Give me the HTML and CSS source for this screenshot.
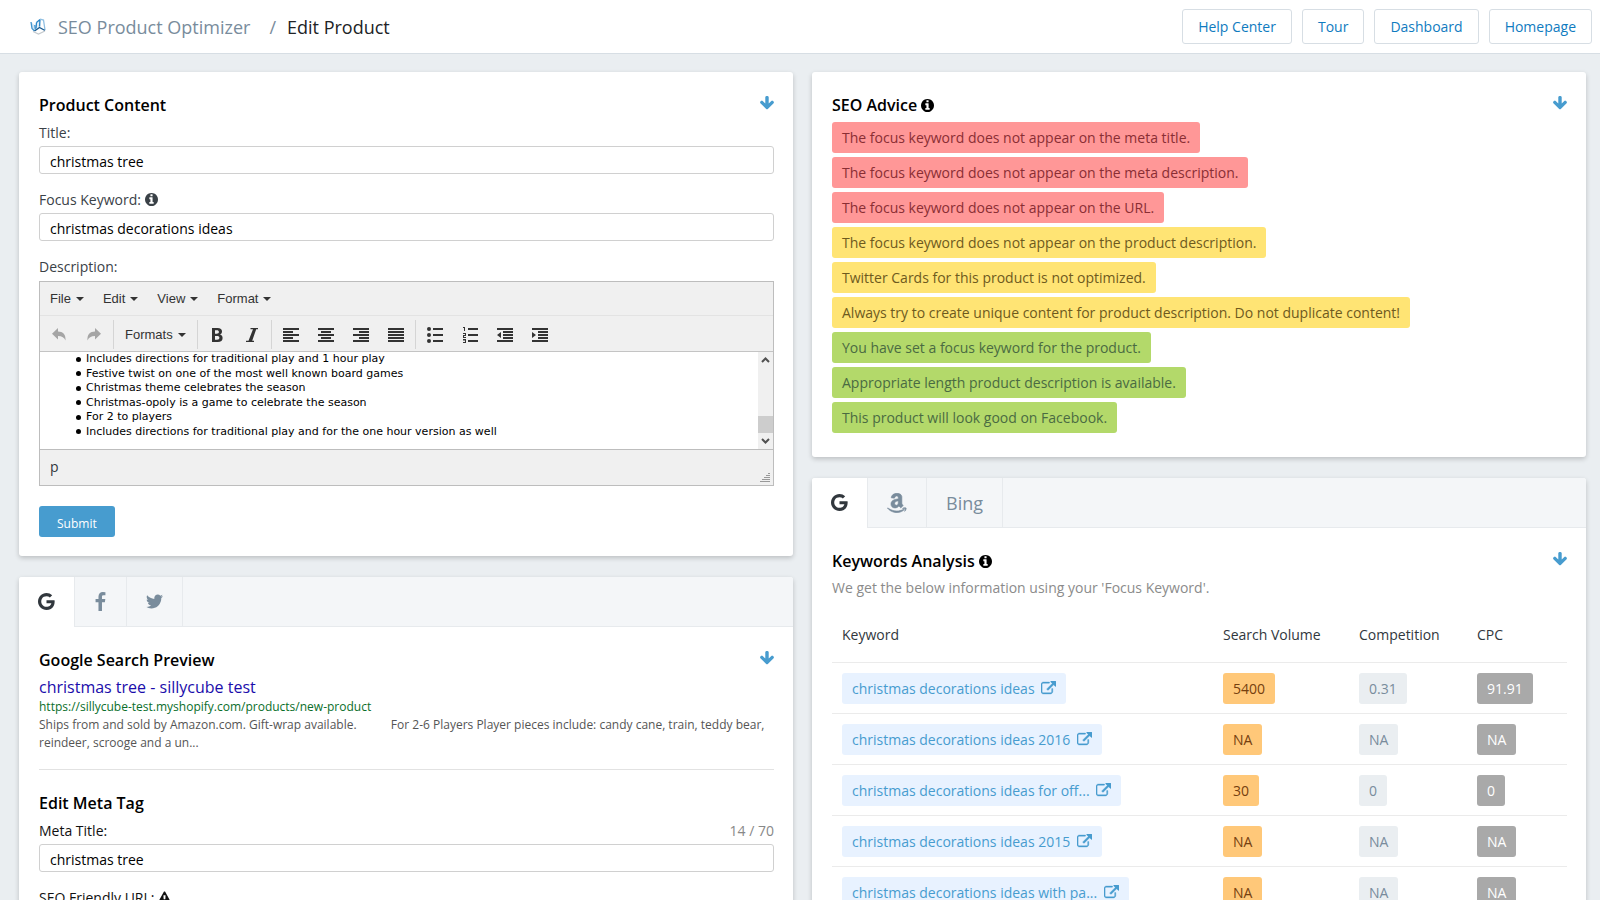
FILE: index.html
```html
<!DOCTYPE html>
<html lang="en">
<head>
<meta charset="utf-8">
<title>SEO Product Optimizer / Edit Product</title>
<link rel="stylesheet" href="styles.css">
</head>
<body>
<svg class="sprite" aria-hidden="true">
  <symbol id="arrow-down" viewBox="110 128 1572 1550"><path d="M1675 832q0 53-37 90l-651 652q-39 37-91 37-53 0-90-37l-651-652q-38-36-38-90 0-53 38-91l74-75q39-37 91-37 53 0 90 37l294 294v-704q0-52 38-90t90-38h128q52 0 90 38t38 90v704l294-294q37-37 90-37 52 0 91 37l75 75q37 39 37 91z"/></symbol>
  <symbol id="info" viewBox="128 128 1536 1536"><path d="M1152 1376v-160q0-14-9-23t-23-9h-96v-512q0-14-9-23t-23-9h-320q-14 0-23 9t-9 23v160q0 14 9 23t23 9h96v320h-96q-14 0-23 9t-9 23v160q0 14 9 23t23 9h448q14 0 23-9t9-23zm-128-896v-160q0-14-9-23t-23-9h-192q-14 0-23 9t-9 23v160q0 14 9 23t23 9h192q14 0 23-9t9-23zm640 416q0 209-103 385.5t-279.5 279.5-385.5 103-385.5-103-279.5-279.5-103-385.5 103-385.5 279.5-279.5 385.5-103 385.5 103 279.5 279.5 103 385.5z"/></symbol>
  <symbol id="google" viewBox="128 128 1536 1536"><path d="M896 786h725q12 67 12 128 0 217-91 387.5t-259.5 266.5-386.5 96q-157 0-299-60.5t-245-163.5-163.5-245-60.5-299 60.5-299 163.5-245 245-163.5 299-60.5q300 0 515 201l-209 201q-123-119-306-119-129 0-238.5 65t-173.5 176.5-64 243.5 64 243.5 173.5 176.5 238.5 65q87 0 160-24t120-60 82-82 51.5-87 22.5-78h-436v-264z"/></symbol>
  <symbol id="facebook" viewBox="479 0 864 1664"><path d="M1343 12v264h-157q-86 0-116 36t-30 108v189h293l-39 296h-254v759h-306v-759h-255v-296h255v-218q0-186 104-288.5t277-102.5q147 0 228 12z"/></symbol>
  <symbol id="twitter" viewBox="108 256 1576 1280"><path d="M1684 408q-67 98-162 167 1 14 1 42 0 130-38 259.5t-115.5 248.5-184.5 210.5-258 146-323 54.5q-271 0-496-145 35 4 78 4 225 0 401-138-105-2-188-64.5t-114-159.5q33 5 61 5 43 0 85-11-112-23-185.5-111.5t-73.5-205.5v-4q68 38 146 41-66-44-105-115t-39-154q0-88 44-163 121 149 294.5 238.5t371.5 99.5q-8-38-8-74 0-134 94.5-228.5t228.5-94.5q140 0 236 102 109-21 205-78-37 115-142 178 93-10 186-50z"/></symbol>
  <symbol id="amazon" viewBox="0 24 456 464"><path stroke="currentColor" stroke-width="14" d="M257.2 162.7c-48.7 1.8-169.5 15.5-169.5 117.5 0 109.5 138.3 114 183.5 43.2 6.5 10.2 35.4 37.5 45.3 46.8l56.8-56S341 288.9 341 261.4V114.3C341 89 316.5 32 228.7 32 140.7 32 94 87 94 136.3l73.5 6.8c16.3-49.5 54.2-49.5 54.2-49.5 40.7-.1 35.5 29.8 35.5 69.1zm0 86.8c0 80-84.2 68-84.2 17.2 0-47.2 50.5-56.7 84.2-57.8v40.6zm136 163.5c-7.7 10-70 67-174.5 67S34.2 408.5 9.7 379c-6.8-7.7 1-11.3 5.5-8.3C88.5 415.2 203 488.5 387.7 401c7.5-3.7 13.3 2 5.5 12zm39.8 2.2c-6.5 15.8-16 26.8-21.2 31-5.5 4.5-9.5 2.7-6.5-3.8s19.3-46.5 12.7-55c-6.5-8.3-37-4.3-48-3.2-10.8 1-13 2-14-.3-2.3-5.7 21.7-15.5 37.5-17.5 15.7-1.8 41-.8 46 5.7 3.7 5.1 0 27.1-6.5 43.1z"/></symbol>
  <symbol id="external" viewBox="0 0 1792 1664"><path stroke="currentColor" stroke-width="50" d="M1408 928v320q0 119-84.5 203.5t-203.5 84.5h-832q-119 0-203.5-84.5t-84.5-203.5v-832q0-119 84.5-203.5t203.5-84.5h704q14 0 23 9t9 23v64q0 14-9 23t-23 9h-704q-66 0-113 47t-47 113v832q0 66 47 113t113 47h832q66 0 113-47t47-113v-320q0-14 9-23t23-9h64q14 0 23 9t9 23zm384-864v512q0 26-19 45t-45 19-45-19l-176-176-652 652q-10 10-23 10t-23-10l-114-114q-10-10-10-23t10-23l652-652-176-176q-19-19-19-45t19-45 45-19h512q26 0 45 19t19 45z"/></symbol>
  <symbol id="warning" viewBox="0 0 1792 1664"><path d="M1024 1375v-190q0-14-9.500-23.500t-22.500-9.500h-192q-13 0-22.500 9.500t-9.500 23.500v190q0 14 9.500 23.500t22.500 9.500h192q13 0 22.500-9.500t9.500-23.500zm-2-374l18-459q0-12-10-19-13-11-24-11h-220q-11 0-24 11-10 7-10 21l17 457q0 10 10 16.500t24 6.500h185q14 0 23.500-6.500t10.500-16.500zm-14-934l768 1408q35 63-2 126-17 29-46.500 46t-63.500 17h-1536q-34 0-63.500-17t-46.500-46q-37-63-2-126l768-1408q17-31 47-49t65-18 65 18 47 49z"/></symbol>
  <symbol id="undo" viewBox="0 0 16 16"><path d="M7 1v3.500c5 0 8 3 7.500 9-1.200-3-3.500-4.500-7.500-4.500v3.500L1 6.700z"/></symbol>
  <symbol id="redo" viewBox="0 0 16 16"><path d="M9 1v3.500c-5 0-8 3-7.500 9 1.200-3 3.500-4.500 7.500-4.500v3.500l6-5.800z"/></symbol>
  <symbol id="bold" viewBox="0 0 16 16"><path fill-rule="evenodd" d="M3 1h5.500c3 0 4.500 1.400 4.500 3.600 0 1.500-.8 2.500-2 3 1.700.5 2.600 1.700 2.600 3.400C13.600 13.500 12 15 8.800 15H3zm3 2.300v3.400h1.600c1.500 0 2.300-.5 2.300-1.700s-.8-1.700-2.200-1.700zM6 9v3.700h2c1.600 0 2.400-.6 2.400-1.900S9.600 9 7.900 9z"/></symbol>
  <symbol id="italic" viewBox="0 0 16 16"><path d="M6.500 1H14v1.200h-1.800L8.200 13.800H10V15H2v-1.200h2.500L9 2.200H6.500z"/></symbol>
  <symbol id="left" viewBox="0 0 16 16"><path d="M0 1h16v2H0zM0 4h10v2H0zM0 7h16v2H0zM0 10h10v2H0zM0 13h16v2H0z"/></symbol>
  <symbol id="center" viewBox="0 0 16 16"><path d="M0 1h16v2H0zM3 4h10v2H3zM0 7h16v2H0zM3 10h10v2H3zM0 13h16v2H0z"/></symbol>
  <symbol id="right" viewBox="0 0 16 16"><path d="M0 1h16v2H0zM6 4h10v2H6zM0 7h16v2H0zM6 10h10v2H6zM0 13h16v2H0z"/></symbol>
  <symbol id="justify" viewBox="0 0 16 16"><path d="M0 1h16v2H0zM0 4h16v2H0zM0 7h16v2H0zM0 10h16v2H0zM0 13h16v2H0z"/></symbol>
  <symbol id="bullets" viewBox="0 0 16 16"><path d="M6 1h10v2H6zM6 7h10v2H6zM6 13h10v2H6z"/><circle cx="2" cy="2" r="2"/><circle cx="2" cy="8" r="2"/><circle cx="2" cy="14" r="2"/></symbol>
  <symbol id="numbers" viewBox="0 0 16 16"><path d="M6 1h10v2H6zM6 7h10v2H6zM6 13h10v2H6zM2 0h1v4H2V1H1V0zM1 6h3v3H2v1h2v1H1V8h2V7H1zM1 12h3v4H1v-1h2v-1H1v-.5h2V13H1z"/></symbol>
  <symbol id="outdent" viewBox="0 0 16 16"><path d="M0 1h16v2H0zM6 4h10v2H6zM6 7h10v2H6zM6 10h10v2H6zM0 13h16v2H0zM4 5v6L0 8z"/></symbol>
  <symbol id="indent" viewBox="0 0 16 16"><path d="M0 1h16v2H0zM6 4h10v2H6zM6 7h10v2H6zM6 10h10v2H6zM0 13h16v2H0zM0 5v6l4-3z"/></symbol>
</svg>

<header class="topbar">
  <div class="crumbs">
    <svg class="logo" viewBox="0 0 17 17" aria-hidden="true">
      <path d="M1 4l3.500 3L5 12l-3-2z" fill="#d5e6f3"/>
      <path d="M6 4.500 10 1.500l1 7.500-5 1.500z" fill="#e3eef7"/>
      <path d="M1 4l1 6.500L4.500 13M4.800 7l.5 4.500" fill="none" stroke="#3d93cf" stroke-width="1.300"/>
      <path d="M6.500 4.500 6 10.500M6.500 4.500 10 1.500M10 1.500 9.500 8.500" fill="none" stroke="#2a86c8" stroke-width="1.300"/>
      <path d="M10 1.200l3.500.8 1.500 10" fill="none" stroke="#8fbfe2" stroke-width="1.300"/>
      <path d="M4.500 13 9.500 9.500 15 12.500" fill="none" stroke="#17598f" stroke-width="1.400"/>
      <path d="M3 13.500 8.500 16l6.500-3" fill="none" stroke="#c3c9ce" stroke-width="1.200"/>
    </svg>
    <a class="crumb-app" href="#">SEO Product Optimizer</a>
    <span class="crumb-sep">/</span>
    <h1 class="crumb-page">Edit Product</h1>
  </div>
  <nav class="nav">
    <a class="nav-link" href="#">Help Center</a>
    <a class="nav-link" href="#">Tour</a>
    <a class="nav-link" href="#">Dashboard</a>
    <a class="nav-link" href="#">Homepage</a>
  </nav>
</header>

<main class="columns">
  <div class="column">
    <section class="card">
      <div class="card-body content-body">
        <div class="card-head">
          <h2 class="card-title">Product Content</h2>
          <button class="collapse" type="button" aria-label="Collapse"><svg><use href="#arrow-down"/></svg></button>
        </div>
        <form class="form">
          <div class="field">
            <label class="label" for="title">Title:</label>
            <input class="input" id="title" type="text" value="christmas tree">
          </div>
          <div class="field">
            <label class="label" for="focus">Focus Keyword: <svg class="info"><use href="#info"/></svg></label>
            <input class="input" id="focus" type="text" value="christmas decorations ideas">
          </div>
          <div class="field">
            <span class="label" id="desc-label">Description:</span>
            <div class="editor">
              <div class="menubar">
                <button class="menu" type="button">File</button>
                <button class="menu" type="button">Edit</button>
                <button class="menu" type="button">View</button>
                <button class="menu" type="button">Format</button>
              </div>
              <div class="toolbar">
                <div class="tools">
                  <button class="tool" type="button" disabled aria-label="Undo"><svg><use href="#undo"/></svg></button>
                  <button class="tool" type="button" disabled aria-label="Redo"><svg><use href="#redo"/></svg></button>
                </div>
                <div class="tools"><button class="menu" type="button">Formats</button></div>
                <div class="tools">
                  <button class="tool" type="button" aria-label="Bold"><svg><use href="#bold"/></svg></button>
                  <button class="tool" type="button" aria-label="Italic"><svg><use href="#italic"/></svg></button>
                </div>
                <div class="tools">
                  <button class="tool" type="button" aria-label="Align left"><svg><use href="#left"/></svg></button>
                  <button class="tool" type="button" aria-label="Align center"><svg><use href="#center"/></svg></button>
                  <button class="tool" type="button" aria-label="Align right"><svg><use href="#right"/></svg></button>
                  <button class="tool" type="button" aria-label="Justify"><svg><use href="#justify"/></svg></button>
                </div>
                <div class="tools">
                  <button class="tool" type="button" aria-label="Bullet list"><svg><use href="#bullets"/></svg></button>
                  <button class="tool" type="button" aria-label="Numbered list"><svg><use href="#numbers"/></svg></button>
                  <button class="tool" type="button" aria-label="Decrease indent"><svg><use href="#outdent"/></svg></button>
                  <button class="tool" type="button" aria-label="Increase indent"><svg><use href="#indent"/></svg></button>
                </div>
              </div>
              <div class="edit-area">
                <div class="edit-text" contenteditable="true" role="textbox" aria-multiline="true" aria-labelledby="desc-label">
                  <ul class="edit-list">
                    <li>Includes directions for traditional play and 1 hour play</li>
                    <li>Festive twist on one of the most well known board games</li>
                    <li>Christmas theme celebrates the season</li>
                    <li>Christmas-opoly is a game to celebrate the season</li>
                    <li>For 2 to players</li>
                    <li>Includes directions for traditional play and for the one hour version as well</li>
                  </ul>
                </div>
                <div class="scrollbar" aria-hidden="true">
                  <svg class="scroll-arrow" viewBox="0 0 9 6"><path d="M1 5l3.500-3.500L8 5"/></svg>
                  <div class="thumb"></div>
                  <svg class="scroll-arrow" viewBox="0 0 9 6"><path d="M1 1l3.500 3.500L8 1"/></svg>
                </div>
              </div>
              <div class="statusbar">
                <span>p</span>
                <svg class="grip" viewBox="0 0 10 10" aria-hidden="true"><path d="M8 0h2v1H8zM6 2h4v1H6zM4 4h6v1H4zM2 6h8v1H2zM0 8h10v1H0z"/></svg>
              </div>
            </div>
          </div>
          <button class="submit" type="button">Submit</button>
        </form>
      </div>
    </section>

    <section class="card">
      <div class="tabs" role="tablist">
        <button class="tab active" type="button" role="tab" aria-selected="true" aria-label="Google"><svg class="i-google"><use href="#google"/></svg></button>
        <button class="tab" type="button" role="tab" aria-label="Facebook"><svg class="i-facebook"><use href="#facebook"/></svg></button>
        <button class="tab" type="button" role="tab" aria-label="Twitter"><svg class="i-twitter"><use href="#twitter"/></svg></button>
      </div>
      <div class="card-body">
        <div class="card-head">
          <h2 class="card-title">Google Search Preview</h2>
          <button class="collapse" type="button" aria-label="Collapse"><svg><use href="#arrow-down"/></svg></button>
        </div>
        <div class="preview">
          <a class="preview-title" href="#">christmas tree - sillycube test</a>
          <div class="preview-url">https://sillycube-test.myshopify.com/products/new-product</div>
          <p class="preview-text">Ships from and sold by Amazon.com. Gift-wrap available.&nbsp;&nbsp;&nbsp;&nbsp;&nbsp;&nbsp;&nbsp;&nbsp;&nbsp;&nbsp; For 2-6 Players Player pieces include: candy cane, train, teddy bear, reindeer, scrooge and a un...</p>
        </div>
        <hr class="rule">
        <h2 class="card-title">Edit Meta Tag</h2>
        <div class="form dark">
          <div class="field">
            <div class="label-row">
              <label class="label" for="meta-title">Meta Title:</label>
              <span class="counter">14 / 70</span>
            </div>
            <input class="input" id="meta-title" type="text" value="christmas tree">
          </div>
          <div class="field">
            <label class="label" for="url">SEO Friendly URL: <svg class="info"><use href="#warning"/></svg></label>
            <input class="input" id="url" type="text" value="new-product">
          </div>
        </div>
      </div>
    </section>
  </div>

  <div class="column">
    <section class="card">
      <div class="card-body advice-body">
        <div class="card-head">
          <h2 class="card-title">SEO Advice <svg class="info"><use href="#info"/></svg></h2>
          <button class="collapse" type="button" aria-label="Collapse"><svg><use href="#arrow-down"/></svg></button>
        </div>
        <ul class="advice">
          <li class="tag red">The focus keyword does not appear on the meta title.</li>
          <li class="tag red">The focus keyword does not appear on the meta description.</li>
          <li class="tag red">The focus keyword does not appear on the URL.</li>
          <li class="tag yellow">The focus keyword does not appear on the product description.</li>
          <li class="tag yellow">Twitter Cards for this product is not optimized.</li>
          <li class="tag yellow">Always try to create unique content for product description. Do not duplicate content!</li>
          <li class="tag green">You have set a focus keyword for the product.</li>
          <li class="tag green">Appropriate length product description is available.</li>
          <li class="tag green">This product will look good on Facebook.</li>
        </ul>
      </div>
    </section>

    <section class="card">
      <div class="tabs" role="tablist">
        <button class="tab active" type="button" role="tab" aria-selected="true" aria-label="Google"><svg class="i-google"><use href="#google"/></svg></button>
        <button class="tab" type="button" role="tab" aria-label="Amazon"><svg class="i-amazon"><use href="#amazon"/></svg></button>
        <button class="tab" type="button" role="tab">Bing</button>
      </div>
      <div class="card-body">
        <div class="card-head">
          <h2 class="card-title">Keywords Analysis <svg class="info"><use href="#info"/></svg></h2>
          <button class="collapse" type="button" aria-label="Collapse"><svg><use href="#arrow-down"/></svg></button>
        </div>
        <p class="hint">We get the below information using your 'Focus Keyword'.</p>
        <table class="keywords">
          <thead>
            <tr><th>Keyword</th><th class="c-volume">Search Volume</th><th class="c-comp">Competition</th><th class="c-cpc">CPC</th></tr>
          </thead>
          <tbody>
            <tr><td><a class="tag blue" href="#">christmas decorations ideas <svg class="ext"><use href="#external"/></svg></a></td><td><span class="tag orange">5400</span></td><td><span class="tag pale">0.31</span></td><td><span class="tag gray">91.91</span></td></tr>
            <tr><td><a class="tag blue" href="#">christmas decorations ideas 2016 <svg class="ext"><use href="#external"/></svg></a></td><td><span class="tag orange">NA</span></td><td><span class="tag pale">NA</span></td><td><span class="tag gray">NA</span></td></tr>
            <tr><td><a class="tag blue" href="#">christmas decorations ideas for off... <svg class="ext"><use href="#external"/></svg></a></td><td><span class="tag orange">30</span></td><td><span class="tag pale">0</span></td><td><span class="tag gray">0</span></td></tr>
            <tr><td><a class="tag blue" href="#">christmas decorations ideas 2015 <svg class="ext"><use href="#external"/></svg></a></td><td><span class="tag orange">NA</span></td><td><span class="tag pale">NA</span></td><td><span class="tag gray">NA</span></td></tr>
            <tr><td><a class="tag blue" href="#">christmas decorations ideas with pa... <svg class="ext"><use href="#external"/></svg></a></td><td><span class="tag orange">NA</span></td><td><span class="tag pale">NA</span></td><td><span class="tag gray">NA</span></td></tr>
          </tbody>
        </table>
      </div>
    </section>
  </div>
</main>
</body>
</html>
```
FILE: styles.css
```css
* { box-sizing: border-box; }

html { height: 100%; }

body {
  display: flex;
  flex-direction: column;
  height: 100%;
  margin: 0;
  overflow: hidden;
  background: #eaeef1;
  color: #31373d;
  font-family: "Open Sans", "Noto Sans", sans-serif;
  font-size: 14px;
  line-height: 20px;
}

button, input { font: inherit; }
button { margin: 0; padding: 0; border: 0; background: none; cursor: pointer; }
a { text-decoration: none; }
h1, h2, p, ul { margin: 0; padding: 0; }
svg { fill: currentColor; }
.sprite { display: none; }

/* Top bar */
.topbar {
  flex: none;
  display: flex;
  justify-content: space-between;
  align-items: center;
  height: 54px;
  padding: 0 8px 0 30px;
  border-bottom: 1px solid #d7dee4;
  background: #fff;
}
.crumbs { display: flex; align-items: center; font-size: 18px; line-height: 28px; }
.logo { width: 17px; height: 17px; margin-right: 11px; }
.crumb-app { color: #798c9c; }
.crumb-sep { margin: 0 11px 0 19px; color: #798c9c; }
.crumb-page { color: #212326; font-size: 18px; font-weight: 400; }
.nav { display: flex; gap: 10px; }
.nav-link {
  padding: 6px 15px 5px;
  border: 1px solid #d7dee4;
  border-radius: 3px;
  color: #0f7bc0;
  line-height: 22px;
}

/* Columns and cards */
.columns {
  flex: 1;
  display: grid;
  grid-template-columns: 1fr 1fr;
  align-items: start;
  gap: 19px;
  min-height: 0;
  padding: 18px 14px 0 19px;
}
.column { display: grid; gap: 21px; }
.card {
  border-radius: 3px;
  background: #fff;
  box-shadow: 0 2px 5px rgba(0, 0, 0, .2);
}
.card-body { padding: 22px 19px 20px 20px; }
.content-body { padding-bottom: 19px; }
.advice-body { padding-bottom: 24px; }
.card-head { display: flex; justify-content: space-between; align-items: flex-start; }
.card-title { color: #000; font-size: 16px; font-weight: 600; line-height: 22px; }
.collapse { color: #479ccf; line-height: 0; }
.collapse svg { width: 14px; height: 14px; margin-top: 2px; }
.info { width: 13px; height: 13px; vertical-align: -1px; }

/* Forms */
.form { display: grid; gap: 16px; padding-top: 7px; }
.label { display: block; line-height: 20px; color: #3a4147; }
.dark .label { color: #111; }
.label-row { display: flex; justify-content: space-between; }
.counter { color: #888; }
.input {
  display: block;
  width: 100%;
  height: 28px;
  margin-top: 3px;
  padding: 2px 10px 0;
  border: 1px solid #d0d0d0;
  border-radius: 3px;
  background: #fff;
  color: #000;
}
.submit {
  justify-self: start;
  height: 31px;
  margin-top: 4px;
  padding: 4px 18px 0;
  border-radius: 3px;
  background: #479ccf;
  color: #fff;
  font-size: 12px;
}

/* Text editor */
.editor { margin-top: 4px; border: 1px solid #bdbdbd; background: #f0f0f0; }
.menubar { display: flex; padding: 2px; border-bottom: 1px solid #e3e3e3; }
.menu {
  display: flex;
  align-items: center;
  gap: 5px;
  height: 29px;
  padding: 0 8px;
  color: #333;
  font-family: "Liberation Sans", Arial, sans-serif;
  font-size: 13px;
}
.menubar .menu { margin-right: 3px; }
.toolbar .menu { padding: 0 9px; }
.menu::after {
  content: "";
  border: 4px solid transparent;
  border-top-color: #333;
  border-bottom: 0;
}
.toolbar { display: flex; padding: 4px 0 2px; border-bottom: 1px solid #c4c4c4; }
.tools { display: flex; gap: 1px; padding: 0 2px; }
.tools + .tools { border-left: 1px solid #d5d5d5; }
.tool { width: 34px; height: 29px; line-height: 0; color: #333; }
.tool:disabled { color: #a5a5a5; }
.tool svg { width: 16px; height: 16px; }
.edit-area { display: flex; height: 97px; background: #fff; }
.edit-text {
  flex: 1;
  overflow: hidden;
  color: #000;
  font-family: Verdana, "DejaVu Sans", sans-serif;
  font-size: 11px;
  line-height: 1.32;
  outline: 0;
}
.edit-list { padding-left: 36px; list-style: none; }
.edit-list li { display: flex; align-items: center; gap: 5px; }
.edit-list li::before { content: ""; width: 5px; height: 5px; border-radius: 50%; background: #000; }
.scrollbar {
  display: flex;
  flex-direction: column;
  align-items: center;
  width: 15px;
  padding: 5px 0;
  background: #f0f0f0;
}
.scroll-arrow { width: 9px; height: 6px; fill: none; stroke: #505050; stroke-width: 2; }
.thumb { width: 15px; height: 17px; margin: auto 0 5px; background: #cdcdcd; }
.statusbar {
  display: flex;
  justify-content: space-between;
  align-items: center;
  height: 36px;
  padding: 0 3px 2px 10px;
  border-top: 1px solid #bdbdbd;
}
.grip { align-self: flex-end; width: 10px; height: 10px; fill: #999; }

/* Tabs */
.tabs {
  display: flex;
  height: 50px;
  border-bottom: 1px solid #e7eaed;
  border-radius: 3px 3px 0 0;
  background: #f4f6f8;
}
.tab {
  display: flex;
  align-items: center;
  height: 49px;
  padding: 0 19px;
  border-right: 1px solid #e7eaed;
  color: #798c9c;
  font-size: 18px;
}
.tab.active { height: 50px; padding-bottom: 2px; border-radius: 3px 0 0 0; background: #fff; color: #31373d; }
.i-google { width: 17px; height: 17px; }
.i-facebook { width: 13px; height: 19px; }
.i-twitter { width: 17px; height: 15px; }
.i-amazon { width: 20px; height: 20px; }

/* Search preview */
.preview { font-size: 12px; line-height: 18px; padding-top: 5px; }
.preview-title { display: block; color: #1a0dab; font-size: 16px; line-height: 22px; }
.preview-url { color: #0a6e2a; }
.preview-text { color: #555; }
.rule { margin: 17px 0 22px; border: 0; border-top: 1px solid #e2e2e2; }

/* Tags */
.tag {
  display: inline-block;
  height: 31px;
  padding: 2px 10px 0;
  border-radius: 3px;
  line-height: 28px;
  white-space: nowrap;
  vertical-align: top;
}
.advice { display: flex; flex-direction: column; align-items: flex-start; gap: 4px; padding-top: 6px; list-style: none; }
.red { background: #ff9797; color: #8a2e34; }
.yellow { background: #ffe474; color: #6e5a1e; }
.green { background: #b3d96a; color: #4a6b42; }
.blue { background: #e8f2ff; color: #479ccf; }
.orange { background: #ffc879; color: #76400f; }
.pale { background: #eaeef1; color: #798c9c; }
.gray { background: #a9a9a9; color: #fff; }
.ext { width: 15px; height: 14px; margin-left: 3px; vertical-align: -1px; }

/* Keywords table */
.hint { padding-top: 6px; color: #8b8b8b; }
.keywords { width: 100%; margin-top: 11px; border-collapse: collapse; }
.keywords th { height: 53px; padding: 0 10px; color: #31373d; font-weight: 400; text-align: left; white-space: nowrap; }
.keywords td { height: 51px; padding: 10px 10px 9px; border-top: 1px solid #ebebeb; vertical-align: top; }
.c-volume { width: 136px; }
.c-comp { width: 118px; }
.c-cpc { width: 100px; }
```
